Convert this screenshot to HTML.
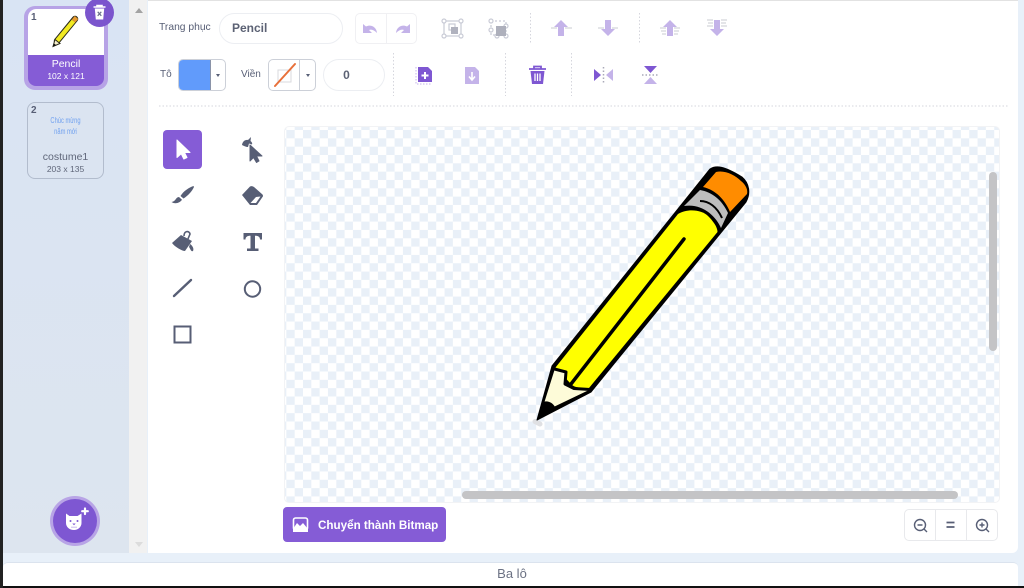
<!DOCTYPE html>
<html><head><meta charset="utf-8"><style>
html,body{margin:0;padding:0;width:1024px;height:588px;overflow:hidden;background:#e8f0f9;font-family:"Liberation Sans",sans-serif;color:#575e75}
.a{position:absolute}
.t{position:absolute;white-space:nowrap}
svg{position:absolute;overflow:visible}
</style></head><body>
<div class="a" style="left:0;top:586px;width:1024px;height:2px;background:#111"></div>
<div class="a" style="left:0;top:0;width:3px;height:588px;background:#222"></div>
<div class="a" style="left:3px;top:0;width:126px;height:553px;background:linear-gradient(#d9e4f4,#dde5ef)"></div>
<div class="a" style="left:129px;top:0;width:18px;height:553px;background:#f1f1f1"></div>
<div class="a" style="left:135px;top:8px;width:0;height:0;border:4px solid transparent;border-top:0;border-bottom:5px solid #a3a3a3"></div>
<div class="a" style="left:135px;top:542px;width:0;height:0;border:4px solid transparent;border-bottom:0;border-top:5px solid #dcdcdc"></div>
<div class="a" style="left:148px;top:0;width:870px;height:553px;background:#fff;border-radius:0 0 6px 0"></div>
<div class="a" style="left:148px;top:0;width:870px;height:1px;background:#e2e2e2"></div>
<div class="a" style="left:3px;top:562px;width:1015px;height:24px;background:#fff;border-radius:5px 5px 0 0;border-top:1px solid #dbe3ee;box-sizing:border-box"></div>
<div class="t" style="left:0;width:1024px;text-align:center;top:566px;font-size:13px;line-height:16px;color:#6b7183">Ba lô</div>

<!-- sprite 1 -->
<div class="a" style="left:24px;top:6px;width:84px;height:84px;box-sizing:border-box;border-radius:11px;background:#b7a3e6"></div>
<div class="a" style="left:28px;top:9px;width:76px;height:77px;border-radius:8px;background:#855cd6;overflow:hidden">
<div class="a" style="left:0;top:0;width:76px;height:46px;background:#fff"></div>
</div>
<div class="t" style="left:31px;top:12px;font-size:10px;font-weight:bold;line-height:12px;color:#575e75">1</div>
<svg style="left:0;top:0" width="150" height="60" viewBox="0 0 150 60">
<path d="M57 41 L75 19" stroke="#2a2a1a" stroke-width="6.500" stroke-linecap="round"/>
<path d="M57 41 L73.500 21" stroke="#f2ea22" stroke-width="4.500"/>
<path d="M73.500 21 L76.500 17.500" stroke="#e69a30" stroke-width="4.500"/>
<path d="M53 46.500 L55 39.500 L60 43.500Z" fill="#f5eecb" stroke="#2a2a1a" stroke-width="1"/>
<path d="M53 46.500L54 43.500L56 45Z" fill="#111"/>
</svg>
<div class="t" style="left:28px;width:76px;text-align:center;top:58px;color:#fff;font-size:10.500px;line-height:12px">Pencil</div>
<div class="t" style="left:28px;width:76px;text-align:center;top:71px;color:#fff;font-size:8.500px;line-height:11px">102 x 121</div>
<div class="a" style="left:85px;top:-2px;width:29px;height:29px;border-radius:50%;background:#7b55cd"></div>
<svg style="left:85px;top:-2px" width="29" height="29" viewBox="0 0 29 29">
<path d="M8.500 9H20.500M12 9V7.500H17V9" stroke="#fff" stroke-width="1.600" fill="none"/>
<path d="M9.800 10.500H19.200L18.200 21.500H10.800Z" fill="#fff"/>
<path d="M12.700 13.800L16.300 17.800M16.300 13.800L12.700 17.800" stroke="#6a6f8a" stroke-width="1.200"/>
</svg>

<!-- sprite 2 -->
<div class="a" style="left:27px;top:102px;width:77px;height:77px;box-sizing:border-box;border:1.500px solid #b2bccd;border-radius:8px;background:#dbe4f1"></div>
<div class="t" style="left:31px;top:105px;font-size:10px;font-weight:bold;line-height:12px;color:#575e75">2</div>
<div class="t" style="left:27px;width:77px;text-align:center;top:115px;font-size:8px;line-height:11px;color:#6fa0f0;transform:scaleX(.72)">Chúc mừng<br>năm mới</div>
<div class="t" style="left:27px;width:77px;text-align:center;top:151px;font-size:10.500px;line-height:12px;color:#60677a">costume1</div>
<div class="t" style="left:27px;width:77px;text-align:center;top:164px;font-size:8.500px;line-height:11px;color:#60677a">203 x 135</div>

<!-- add button -->
<div class="a" style="left:50px;top:496px;width:50px;height:50px;border-radius:50%;background:#b8a4e6"></div>
<div class="a" style="left:53px;top:499px;width:44px;height:44px;border-radius:50%;background:#7e57d2"></div>
<svg style="left:50px;top:496px" width="50" height="50" viewBox="0 0 50 50">
<path d="M16 17.500L19.500 20H27.500L31.500 17.500V27C31.500 31 28 34 24 34C19.500 34 16 31 16 27Z" fill="#fff"/>
<path d="M22.300 27.500H25.700L24 29.300Z" fill="#7e57d2"/>
<path d="M21 31.200H27" stroke="#c9b8ee" stroke-width="1"/>
<circle cx="20.500" cy="25" r="1" fill="#7e57d2"/><circle cx="27.500" cy="25" r="1" fill="#7e57d2"/>
<path d="M35 12.500V18M32.200 15.200H37.800" stroke="#fff" stroke-width="2.200" stroke-linecap="round"/>
</svg>

<!-- toolbar row 1 -->
<div class="t" style="left:159px;top:22px;font-size:10.300px;line-height:12px">Trang phục</div>
<div class="a" style="left:219px;top:13px;width:124px;height:31px;box-sizing:border-box;border:1px solid #eceef2;border-radius:16px"></div>
<div class="t" style="left:232px;top:21px;font-size:12px;font-weight:bold;line-height:14px;color:#5c6274">Pencil</div>
<div class="a" style="left:355px;top:13px;width:62px;height:31px;box-sizing:border-box;border:1px solid #f0f0f3;border-radius:5px"></div>
<div class="a" style="left:386px;top:13px;width:1px;height:31px;background:#f0f0f3"></div>
<svg style="left:0;top:0" width="1024" height="110" viewBox="0 0 1024 110">
<g fill="#c4b3e9">
<path d="M363 24V33H372L369 30C371.500 29 374 30 377 33C376.500 27 371 24 366 26.500Z"/>
<path d="M410 24V33H401L404 30C401.500 29 399 30 396 33C396.500 27 402 24 407 26.500Z"/>
</g>
<g fill="none" stroke="#c9cbd6" stroke-width="1.200">
<rect x="444" y="21" width="17" height="15"/>
<circle cx="444" cy="21" r="2" fill="#fff"/><circle cx="461" cy="21" r="2" fill="#fff"/><circle cx="444" cy="36" r="2" fill="#fff"/><circle cx="461" cy="36" r="2" fill="#fff"/>
<rect x="449" y="24" width="6" height="6"/>
<rect x="491" y="21" width="15" height="14" stroke-dasharray="2 2"/>
<circle cx="491" cy="21" r="2" fill="#fff"/><circle cx="491" cy="30" r="2" fill="#fff"/><circle cx="506" cy="26" r="2" fill="#fff"/><circle cx="506" cy="36" r="2" fill="#fff"/><circle cx="497" cy="36" r="2" fill="#fff"/>
</g>
<rect x="451" y="27" width="7" height="7" fill="#b0b2be"/>
<rect x="496" y="26" width="10" height="10" fill="#aeb0bc"/>
<g stroke="#d5d6dd" stroke-dasharray="1.500 2" stroke-width="1" fill="none">
<path d="M530.500 13V44M639.500 13V44"/>
<path d="M393.500 53V96M505.500 53V96M571.500 53V96"/>
<path d="M159 106H1008"/>
</g>
<g fill="#c4b3e9">
<path d="M561 20L568 27H564V36H558V27H554Z"/>
<path d="M605 20H611V29H615L608 36L601 29H605Z"/>
<path d="M670 20L677 27H673V36H667V27H663Z"/>
<path d="M714 20H720V29H724L717 36L710 29H714Z"/>
</g>
<g stroke="#c9cbd2" stroke-width="1" fill="none">
<path d="M551 28H557M565 28H572M598 28H604M612 28H618M660 28H666M674 28H680M661 31H666M674 31H679M662 34H666M674 34H678M707 20H713M721 20H727M708 23H713M721 23H726M707 26H713M721 26H727"/>
</g>
<!-- row 2 icons -->
<path d="M418 67H428L432 71V82H418Z" fill="#7e57d2"/>
<path d="M425 72V79M421.500 75.500H428.500" stroke="#fff" stroke-width="2"/>
<path d="M416 67V84H432" fill="none" stroke="#c4b3e9" stroke-width="1" stroke-dasharray="1.500 1.500"/>
<path d="M465 67H475L479 71V84H465Z" fill="#c4b3e9"/>
<path d="M472 72V79M469 76.500L472 80L475 76.500" stroke="#fff" stroke-width="1.600" fill="none"/>
<path d="M529 69H546M534 69V66.500H541V69" stroke="#7e57d2" stroke-width="1.800" fill="none"/>
<path d="M530.500 71H544.500L543 84H532Z" fill="#7e57d2"/>
<path d="M535 73.500V81M537.500 73.500V81M540 73.500V81" stroke="#fff" stroke-width="1.300"/>
<path d="M594 69L601 75L594 81Z" fill="#7e57d2"/>
<path d="M613 69L606 75L613 81Z" fill="#c4b3e9"/>
<path d="M603.500 67V84" stroke="#a9a9b8" stroke-width="1.500" stroke-dasharray="1.500 2"/>
<path d="M644 66H657L650.500 73Z" fill="#7e57d2"/>
<path d="M644 84H657L650.500 77Z" fill="#c4b3e9"/>
<path d="M642 75H659" stroke="#a9a9b8" stroke-width="1.500" stroke-dasharray="1.500 2"/>
</svg>

<div class="t" style="left:160px;top:69px;font-size:10px;line-height:12px">Tô</div>
<div class="a" style="left:178px;top:59px;width:48px;height:32px;box-sizing:border-box;border:1px solid #ccd0d8;border-radius:5px;overflow:hidden">
<div class="a" style="left:0;top:0;width:31px;height:30px;background:#619bfb;border-right:1px solid #8a93a8"></div>
<div class="a" style="left:37px;top:14px;width:0;height:0;border:2.500px solid transparent;border-bottom:0;border-top:3px solid #575e75"></div>
</div>
<div class="t" style="left:241px;top:69px;font-size:10px;line-height:12px">Viền</div>
<div class="a" style="left:268px;top:59px;width:48px;height:32px;box-sizing:border-box;border:1px solid #ccd0d8;border-radius:5px;overflow:hidden">
<div class="a" style="left:30px;top:0;width:1px;height:30px;background:#ccd0d8"></div>
<div class="a" style="left:37px;top:14px;width:0;height:0;border:2.500px solid transparent;border-bottom:0;border-top:3px solid #575e75"></div>
<svg style="left:0;top:0" width="30" height="30" viewBox="0 0 30 30">
<rect x="9" y="10" width="13" height="12" fill="none" stroke="#d8dade"/>
<path d="M6 26L26 4" stroke="#e8703a" stroke-width="2" stroke-linecap="round"/>
</svg>
</div>
<div class="a" style="left:323px;top:59px;width:62px;height:32px;box-sizing:border-box;border:1px solid #eceef2;border-radius:16px"></div>
<div class="t" style="left:323px;width:47px;text-align:center;top:68px;font-size:12px;font-weight:bold;line-height:14px;color:#5c6274;padding-left:0">0</div>

<!-- tools -->
<div class="a" style="left:163px;top:130px;width:39px;height:39px;border-radius:4px;background:#855cd6"></div>
<svg style="left:150px;top:120px" width="140" height="230" viewBox="0 0 140 230">
<path d="M27 20V37.500L31.200 33.800L33.800 39L37 37.500L34.500 32.500H40Z" fill="#fff" stroke="#fff" stroke-width="1" stroke-linejoin="round"/>
<g fill="#575e75">
<path d="M100 25V41L103.500 37.500L106.500 42.500L109 41L106.500 36H112Z" stroke="#575e75" stroke-width="1" stroke-linejoin="round"/>
<path d="M92 25C92.500 21.500 95 19.500 98 20L101 17L100.500 21C102 22 102.500 23.500 102 24.500L99 23.500L98 27C96 27 94 26 92 25Z"/>
<path d="M43.500 66C39 67.500 33.500 71 30.500 76L33.500 78.500C37.500 76 42 71.500 44 67Z"/>
<path d="M21.500 82C25 84.500 30 83 32 79.800L29 77C25.500 77 26 81.500 21.500 82Z"/>
<path d="M92 75L100 66.500Q102 65.500 104 67L112.500 74.500Q113.500 76 112.500 77L107 85H100Z"/>
<path d="M22 123L31 115L42 121L35 131C32 131 25 127 22 123Z"/>
<path d="M34 116C34 111 39 110 40 114L37.500 120" fill="none" stroke="#575e75" stroke-width="1.600"/>
<path d="M40 124C43 126 44 129 43 131C41 132 40.500 129 39 127Z"/>
<path d="M93.500 113H112V119.500H110C110 117 108.500 115.700 105 115.700V128.500H108.500V131H97V128.500H100.500V115.700C97 115.700 95.500 117 95.500 119.500H93.500Z"/>
</g>
<path d="M100.500 83L106 77L110.500 76.500L106 83Z" fill="#fff"/>
<path d="M24 176L41 160" stroke="#575e75" stroke-width="2.400" stroke-linecap="round"/>
<circle cx="102.500" cy="169" r="7.700" fill="none" stroke="#575e75" stroke-width="2"/>
<rect x="24.500" y="206.500" width="16" height="16" fill="none" stroke="#575e75" stroke-width="2"/>
</svg>

<!-- canvas -->
<div class="a" style="left:284px;top:126px;width:716px;height:377px;border:1px solid #f2f3f5;box-sizing:border-box;border-radius:5px;background-color:#fff;background-image:conic-gradient(#e9f0f8 25%,#fff 0 50%,#e9f0f8 0 75%,#fff 0);background-size:16.660px 16.660px;background-position:-7px 3px"></div>
<div class="a" style="left:989px;top:172px;width:8px;height:179px;border-radius:4px;background:#c4c4c6"></div>
<div class="a" style="left:462px;top:491px;width:496px;height:8px;border-radius:4px;background:#c4c4c6"></div>

<!-- pencil -->
<svg style="left:0;top:0" width="1024" height="588" viewBox="0 0 1024 588">
<path d="M535 421.500L540 424" stroke="#dfe0e3" stroke-width="5" stroke-linecap="round"/>
<path d="M537 420L552 366L710 169C716 165 724 166 742 177C749 183 751 193 746 202L591 392Z" fill="#000" stroke="#000" stroke-width="1" stroke-linejoin="round"/>
<path d="M703 187L716 172C725 170 735 175 741 181C746 185 748 190 747 194L730 212C725 200 716 190 703 187Z" fill="#ff8c00"/>
<path d="M684 206L700 190C712 192 722 200 728 213L721 228C716 216 702 203 684 206Z" fill="#bdbdbd"/>
<path d="M700 201C709 201 717 207 722 218" fill="none" stroke="#000" stroke-width="2"/>
<path d="M555.500 367.500L678 214C688 208 702 210 708 216C713 221 717.500 227 717.500 232L589 388C580 388 575 388 571 384Z" fill="#ffff00"/>
<path d="M541 413L554.500 370L566 372L565 384L574 388.500L589 390Z" fill="#fdfbd8"/>
<path d="M554.500 369L566 372L565 384L574 388.500L590 389.500" fill="none" stroke="#000" stroke-width="3" stroke-linejoin="round"/>
<path d="M537 419L543 402C548 400 553 403 555 407Z" fill="#000"/>
<path d="M684 239L571 384" stroke="#000" stroke-width="3.500" stroke-linecap="round"/>
</svg>

<!-- bitmap button -->
<div class="a" style="left:283px;top:507px;width:163px;height:35px;border-radius:4px;background:#855cd6"></div>
<svg style="left:283px;top:507px" width="30" height="35" viewBox="0 0 30 35">
<rect x="10.500" y="11" width="14" height="12" rx="2" fill="none" stroke="#fff" stroke-width="1.600"/>
<path d="M10 22L14 16L17 19L20 16L25 22V25H10Z" fill="#fff"/>
</svg>
<div class="t" style="left:318px;top:518px;font-size:11.650px;font-weight:bold;line-height:15px;color:#fff">Chuyển thành Bitmap</div>

<!-- zoom -->
<div class="a" style="left:904px;top:509px;width:94px;height:32px;box-sizing:border-box;border:1px solid #e8e9ec;border-radius:5px"></div>
<div class="a" style="left:935px;top:509px;width:1px;height:32px;background:#e8e9ec"></div>
<div class="a" style="left:966px;top:509px;width:1px;height:32px;background:#e8e9ec"></div>
<svg style="left:904px;top:509px" width="94" height="32" viewBox="0 0 94 32">
<g fill="none" stroke="#575e75" stroke-width="1.400">
<circle cx="16" cy="16" r="5.500"/><path d="M20 20L23 23M13.500 16H18.500"/>
<circle cx="78" cy="16" r="5.500"/><path d="M82 20L85 23M75.500 16H80.500M78 13.500V18.500"/>
<path d="M42.500 13.500H50.500M42.500 18H50.500" stroke-width="1.800"/>
</g>
</svg>
</body></html>
